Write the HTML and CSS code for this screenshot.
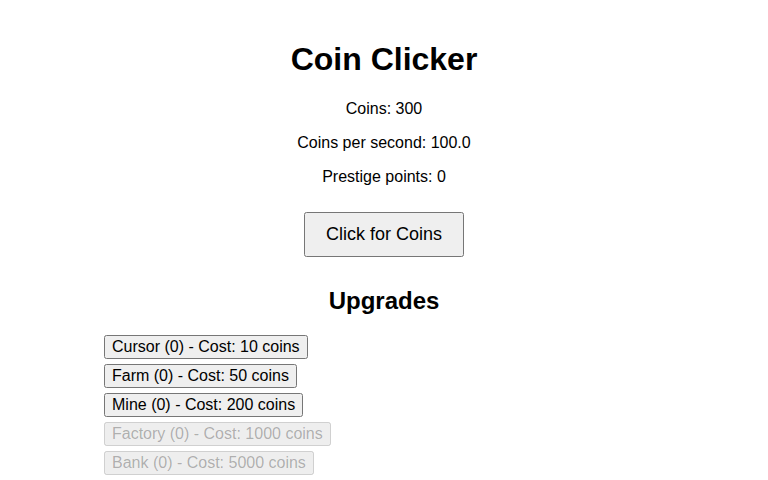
FILE: index.html
```html
<!DOCTYPE html>
<html>
<head>
<meta charset="utf-8">
<title>Coin Clicker</title>
<link rel="stylesheet" href="styles.css">
</head>
<body>
<div class="game">
  <h1 class="title">Coin Clicker</h1>
  <p class="stat">Coins: 300</p>
  <p class="stat">Coins per second: 100.0</p>
  <p class="stat">Prestige points: 0</p>
  <div class="click-area">
    <button class="click-btn">Click for Coins</button>
  </div>
  <h2 class="section-title">Upgrades</h2>
  <div class="upgrades">
    <button class="upgrade-btn">Cursor (0) - Cost: 10 coins</button>
    <button class="upgrade-btn">Farm (0) - Cost: 50 coins</button>
    <button class="upgrade-btn">Mine (0) - Cost: 200 coins</button>
    <button class="upgrade-btn" disabled>Factory (0) - Cost: 1000 coins</button>
    <button class="upgrade-btn" disabled>Bank (0) - Cost: 5000 coins</button>
  </div>
</div>
</body>
</html>
```
FILE: styles.css
```css
html, body {
  margin: 0;
  padding: 0;
  background: #ffffff;
}
body {
  font-family: "Liberation Sans", Arial, sans-serif;
  color: #000;
  padding: 20px;
}
.game {
  max-width: 560px;
  margin: 0 auto;
  text-align: center;
}
.title {
  font-size: 32px;
  font-weight: bold;
  margin: 21.44px 0;
}
.stat {
  font-size: 16px;
  margin: 16px 0;
}
.click-area {
  margin: 0;
}
.click-btn {
  font-family: "Liberation Sans", Arial, sans-serif;
  font-size: 18px;
  padding: 10px 20px;
  margin: 10px;
}
.section-title {
  font-size: 24px;
  font-weight: bold;
  margin: 19.92px 0;
}
.upgrades {
  text-align: left;
}
.upgrade-btn {
  display: block;
  margin: 5px 0;
  font-family: "Liberation Sans", Arial, sans-serif;
  font-size: 16px;
}
```
